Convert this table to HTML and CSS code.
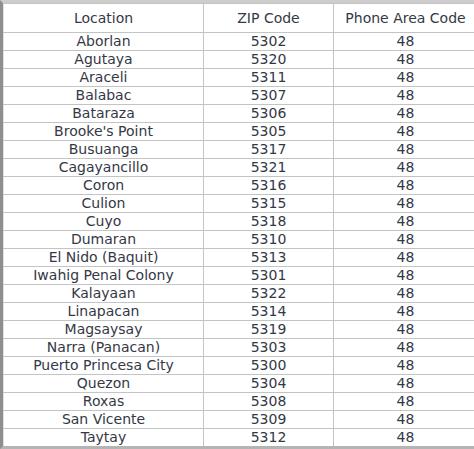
FILE: index.html
```html
<!DOCTYPE html>
<html>
<head>
<meta charset="utf-8">
<link rel="stylesheet" href="styles.css">
</head>
<body>
<div class="frame">
<table class="zip">
<thead>
<tr><th class="c1">Location</th><th class="c2">ZIP Code</th><th class="c3">Phone Area Code</th></tr>
</thead>
<tbody>
<tr><td>Aborlan</td><td>5302</td><td>48</td></tr>
<tr><td>Agutaya</td><td>5320</td><td>48</td></tr>
<tr><td>Araceli</td><td>5311</td><td>48</td></tr>
<tr><td>Balabac</td><td>5307</td><td>48</td></tr>
<tr><td>Bataraza</td><td>5306</td><td>48</td></tr>
<tr><td>Brooke's Point</td><td>5305</td><td>48</td></tr>
<tr><td>Busuanga</td><td>5317</td><td>48</td></tr>
<tr><td>Cagayancillo</td><td>5321</td><td>48</td></tr>
<tr><td>Coron</td><td>5316</td><td>48</td></tr>
<tr><td>Culion</td><td>5315</td><td>48</td></tr>
<tr><td>Cuyo</td><td>5318</td><td>48</td></tr>
<tr><td>Dumaran</td><td>5310</td><td>48</td></tr>
<tr><td>El Nido (Baquit)</td><td>5313</td><td>48</td></tr>
<tr><td>Iwahig Penal Colony</td><td>5301</td><td>48</td></tr>
<tr><td>Kalayaan</td><td>5322</td><td>48</td></tr>
<tr><td>Linapacan</td><td>5314</td><td>48</td></tr>
<tr><td>Magsaysay</td><td>5319</td><td>48</td></tr>
<tr><td>Narra (Panacan)</td><td>5303</td><td>48</td></tr>
<tr><td>Puerto Princesa City</td><td>5300</td><td>48</td></tr>
<tr><td>Quezon</td><td>5304</td><td>48</td></tr>
<tr><td>Roxas</td><td>5308</td><td>48</td></tr>
<tr><td>San Vicente</td><td>5309</td><td>48</td></tr>
<tr><td>Taytay</td><td>5312</td><td>48</td></tr>
</tbody>
</table>
</div>
</body>
</html>
```
FILE: styles.css
```css
html, body {
  margin: 0;
  padding: 0;
  background: #ffffff;
}
.frame {
  width: 471px;
  height: 443px;
  border-top: 3px solid #cdcdcd;
  border-left: 3px solid #8e8e8e;
  border-bottom: 3px solid #b4b4b4;
  overflow: hidden;
}
.zip {
  border-collapse: collapse;
  width: 472px;
  font-family: "DejaVu Sans", Verdana, sans-serif;
  font-size: 14px;
  color: #343845;
  table-layout: fixed;
}
.zip th, .zip td {
  border: 1px solid #c4c4c4;
  padding: 0;
  text-align: center;
  font-weight: normal;
  white-space: nowrap;
}
.zip th {
  height: 28px;
  line-height: 28px;
}
.zip td {
  height: 17px;
  line-height: 17px;
}
.zip th:first-child, .zip td:first-child {
  border-left: 1px solid #e2e2e2;
}
.zip th:last-child, .zip td:last-child {
  border-right: none;
}
.c1 { width: 199px; }
.c2 { width: 129px; }
.c3 { width: 143px; }
```
